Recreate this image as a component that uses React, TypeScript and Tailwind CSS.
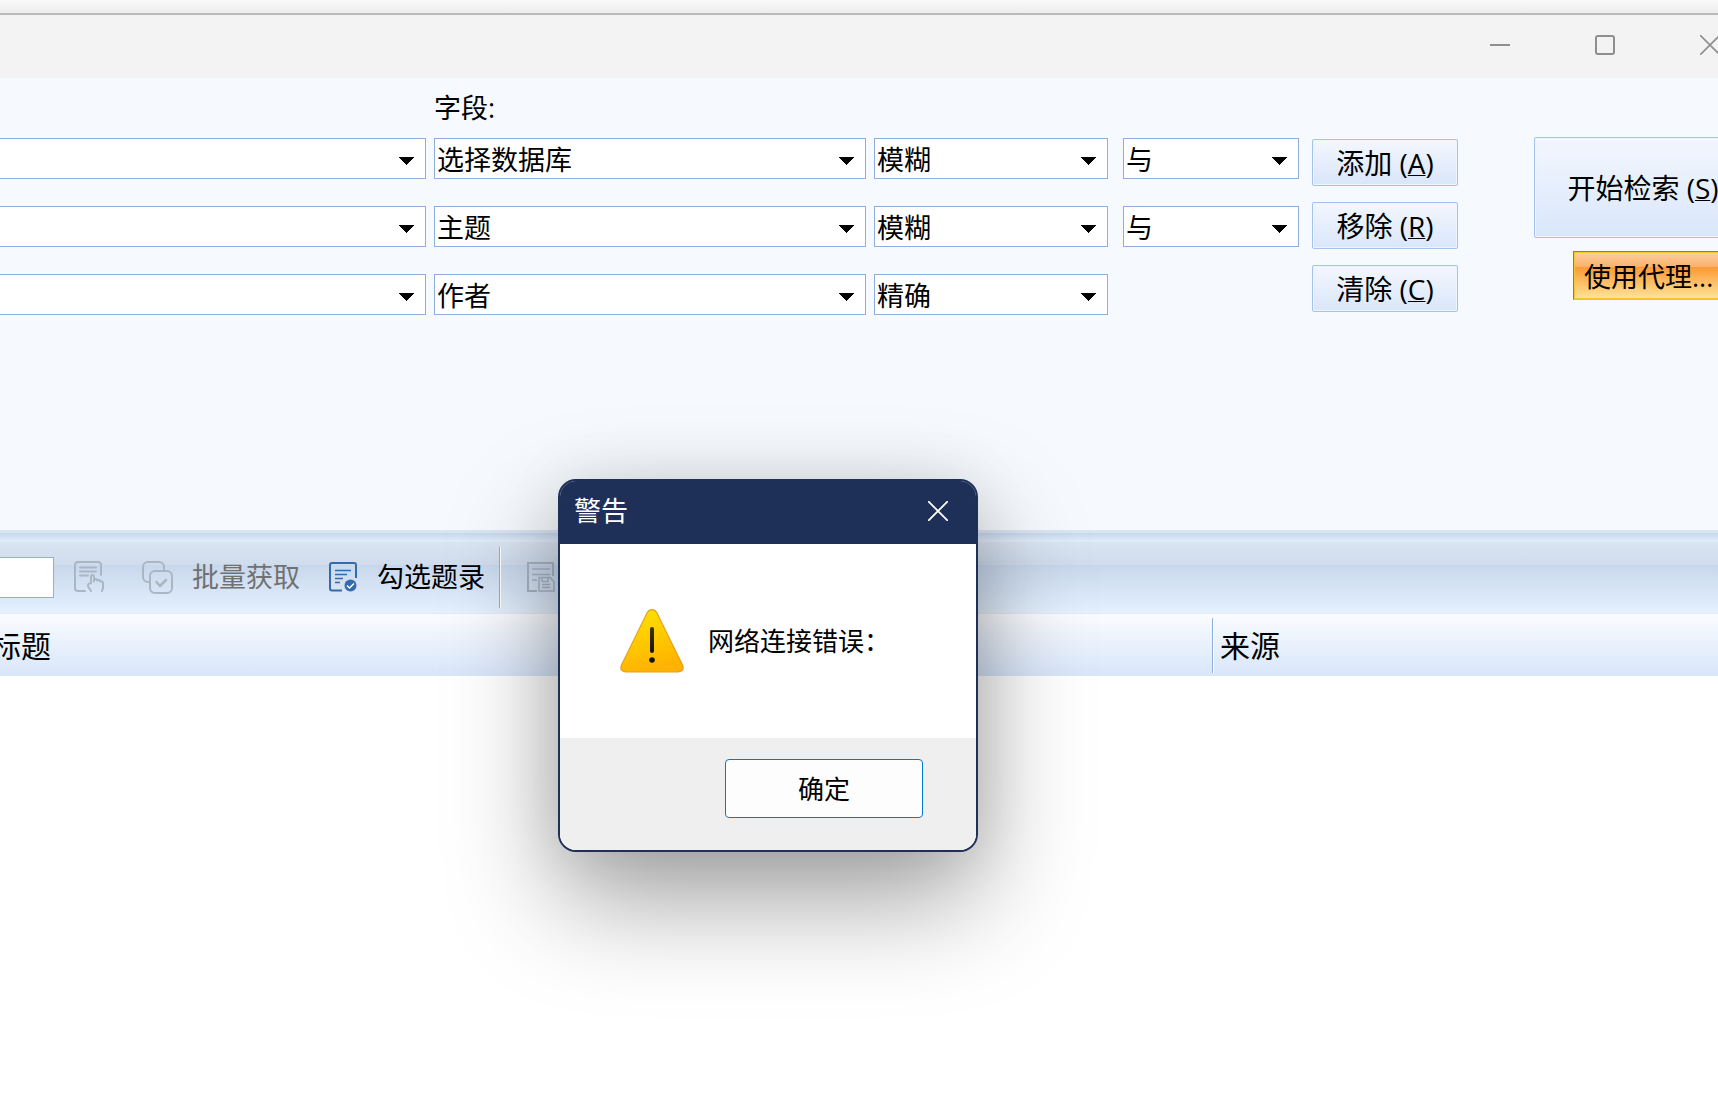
import { useState } from "react";

const fieldOptions = ["选择数据库", "主题", "作者", "标题", "关键词"];
const matchOptions = ["模糊", "精确"];
const logicOptions = ["与", "或", "非"];

const initialRows = [
  { id: 1, term: "", field: "选择数据库", match: "模糊", logic: "与" },
  { id: 2, term: "", field: "主题", match: "模糊", logic: "与" },
  { id: 3, term: "", field: "作者", match: "精确", logic: "" },
];

const actions = [
  { text: "添加", hotkey: "A" },
  { text: "移除", hotkey: "R" },
  { text: "清除", hotkey: "C" },
];

type ComboProps = {
  id: string;
  label: string;
  value: string;
  options: string[];
  onChange: (value: string) => void;
};

function Combo({ id, label, value, options, onChange }: ComboProps) {
  return (
    <div className="relative">
      <select
        id={id}
        aria-label={label}
        value={value}
        onChange={(e) => onChange(e.target.value)}
        className="block h-[41px] w-full appearance-none border border-[#8eaedb] bg-white pl-0.5 pr-10 pt-0.5 text-[27px] leading-9 text-black outline-none"
      >
        {options.map((option) => (
          <option key={option} value={option}>
            {option}
          </option>
        ))}
      </select>
      <svg
        className="pointer-events-none absolute right-3 top-[19px] h-2 w-[15px]"
        viewBox="0 0 15 8"
        fill="#000"
        shapeRendering="crispEdges"
      >
        <path d="M0 0h15L7.5 8z" />
      </svg>
    </div>
  );
}

function TitleBar() {
  return (
    <header className="flex h-[63px] items-start justify-end bg-[#f3f3f3] pr-px text-[#8f8f8f]">
      <button aria-label="最小化" className="flex h-[60px] w-[105px] items-center justify-center">
        <svg width="20" height="20" viewBox="0 0 20 20" stroke="currentColor" strokeWidth="2">
          <path d="M0 10h20" />
        </svg>
      </button>
      <button aria-label="最大化" className="flex h-[60px] w-[105px] items-center justify-center">
        <svg width="20" height="20" viewBox="0 0 20 20" fill="none" stroke="currentColor" strokeWidth="2">
          <rect x="1" y="1" width="18" height="18" rx="2" />
        </svg>
      </button>
      <button aria-label="关闭" className="flex h-[60px] w-[105px] items-center justify-center">
        <svg width="20" height="20" viewBox="0 0 20 20" stroke="currentColor" strokeWidth="1.6">
          <path d="M0 0l20 20M20 0L0 20" />
        </svg>
      </button>
    </header>
  );
}

function SearchPanel() {
  const [rows, setRows] = useState(initialRows);

  const update = (id: number, key: string, value: string) => {
    setRows(rows.map((row) => (row.id === id ? { ...row, [key]: value } : row)));
  };

  return (
    <section className="flex items-start bg-[#f6faff] pb-[215px] pr-[11px] text-[27px]">
      <div className="-ml-0.5 flex-1">
        <div className="grid grid-cols-[1fr_432px_234px_183px] gap-x-2 pb-3 pt-3">
          <label htmlFor="field-1" className="col-start-2 leading-9">
            字段:
          </label>
        </div>
        <div className="flex flex-col gap-[27px]">
          {rows.map((row) => (
            <div key={row.id} className="grid grid-cols-[1fr_432px_234px_183px] gap-x-2">
              <Combo
                id={`term-${row.id}`}
                label="检索词"
                value={row.term}
                options={[""]}
                onChange={(value) => update(row.id, "term", value)}
              />
              <Combo
                id={`field-${row.id}`}
                label="字段"
                value={row.field}
                options={fieldOptions}
                onChange={(value) => update(row.id, "field", value)}
              />
              <Combo
                id={`match-${row.id}`}
                label="匹配"
                value={row.match}
                options={matchOptions}
                onChange={(value) => update(row.id, "match", value)}
              />
              {row.logic && (
                <div className="pl-[7px]">
                  <Combo
                    id={`logic-${row.id}`}
                    label="逻辑"
                    value={row.logic}
                    options={logicOptions}
                    onChange={(value) => update(row.id, "logic", value)}
                  />
                </div>
              )}
            </div>
          ))}
        </div>
      </div>
      <div className="ml-[13px] flex flex-col gap-4 pt-[61px]">
        {actions.map((action) => (
          <button
            key={action.hotkey}
            className="h-[47px] w-[146px] rounded-[2px] border border-[#a3c2ee] bg-linear-to-b from-[#f3f7fe] to-[#d9e6fa] text-[28px] leading-9 shadow-[inset_0_0_0_1px_#eff5fe]"
          >
            {action.text} (<span className="underline decoration-1 underline-offset-1">{action.hotkey}</span>)
          </button>
        ))}
      </div>
      <div className="ml-[76px] flex flex-col items-end gap-[13px] pt-[59px]">
        <button className="h-[101px] w-[218px] rounded-[2px] border border-[#a3c2ee] bg-linear-to-b from-[#f3f7fe] to-[#d9e6fa] text-[28px] leading-9 shadow-[inset_0_0_0_1px_#eff5fe]">
          开始检索 (<span className="underline decoration-1 underline-offset-1">S</span>)
        </button>
        <button className="h-[49px] w-[179px] border border-b-[#c9bfa4] border-l-[#8a7b5c] border-r-[#c9bfa4] border-t-[#8a7b5c] bg-[linear-gradient(#fdcfa2,#fcb16a_32%,#fb9a34_32%,#fee59a)] pl-2.5 pt-0.5 text-left leading-9 shadow-[inset_0_0_0_1px_#f8c62c]">
          使用代理...
        </button>
      </div>
    </section>
  );
}

function PickIcon() {
  return (
    <svg width="30" height="32" viewBox="0 0 30 32" fill="none" stroke="#aab6c4" strokeWidth="2" strokeLinecap="round" strokeLinejoin="round">
      <path d="M11 30H4a3 3 0 0 1-3-3V4a3 3 0 0 1 3-3h20a3 3 0 0 1 3 3v10" />
      <path d="M6 6.500h16M6 10.500h16M6 14.500h8" />
      <path d="M17 30c-1-2-3-3.500-3-5.500 0-1.500 1-2.500 3-2v-7c0-2 3-2 3 0v5-2c1-1 3-.5 3 1 1-1 3-.5 3 1 1-.500 3 0 3 1.500v5l-1 3" />
    </svg>
  );
}

function BatchIcon() {
  return (
    <svg width="31" height="33" viewBox="0 0 31 33" fill="none" stroke="#aab6c4" strokeWidth="2" strokeLinecap="round" strokeLinejoin="round">
      <path d="M8 21H6a5 5 0 0 1-5-5V6a5 5 0 0 1 5-5h11a5 5 0 0 1 5 5v3" />
      <rect x="8" y="10" width="22" height="22" rx="5" />
      <path d="M14.500 21l3.500 4 6-6" strokeWidth="2.500" />
    </svg>
  );
}

function CheckedListIcon() {
  return (
    <svg width="28" height="30" viewBox="0 0 28 30" fill="none" stroke="#356aab" strokeWidth="2">
      <path d="M13 28.500H3a2 2 0 0 1-2-2V3a2 2 0 0 1 2-2h22a2 2 0 0 1 2 2v13" />
      <path d="M6 8.500h16M6 12.500h12M6 16.500h8M6 20.500h5" strokeWidth="1.300" />
      <circle cx="21.500" cy="23.500" r="6" fill="#356aab" stroke="none" />
      <path d="M18 23.500l2.500 2.500 4.500-4.500" stroke="#fff" strokeWidth="1.500" />
    </svg>
  );
}

function SaveListIcon() {
  return (
    <svg width="28" height="30" viewBox="0 0 28 30" fill="none" stroke="#a9b5c3" strokeWidth="2">
      <path d="M10 29H1V1h25v13" />
      <path d="M5 7h18M5 12.500h18M5 18h5" strokeWidth="1.500" />
      <path d="M12 15.500h11l4 4V29H12zM15 15.500v4h6v-4M15 22.500h8M15 25.500h8" strokeWidth="1.500" />
    </svg>
  );
}

function Toolbar() {
  return (
    <>
      <div className="h-[3px] bg-[#dae5f2]" />
      <div className="h-[9px] bg-linear-to-b from-[#c6d7ec] to-[#e3eefb]" />
      <div className="h-[72px] border-b border-[#eceae9] bg-[linear-gradient(#dae5f2,#cfdcec_23px,#c8d7ec_23px,#e4f1fe)] text-[27px]">
        <div className="flex h-[70px] items-center">
          <input aria-label="页码" className="h-[41px] w-[54px] border border-l-0 border-[#93aedb] bg-white px-1 outline-none" />
          <button aria-label="选取" disabled className="ml-5">
            <PickIcon />
          </button>
          <button disabled className="ml-[38px] flex items-center gap-[19px] text-[#717171]">
            <BatchIcon />
            批量获取
          </button>
          <button className="ml-[29px] flex items-center gap-5">
            <CheckedListIcon />
            勾选题录
          </button>
          <div className="ml-[14px] h-[61px] w-0.5 border-l border-[#8eaedb] bg-white" />
          <button aria-label="保存" disabled className="ml-[26px]">
            <SaveListIcon />
          </button>
        </div>
      </div>
    </>
  );
}

function ResultTable() {
  return (
    <table className="-ml-4 w-[calc(100%+16px)] table-fixed border-collapse text-left text-[30px]">
      <thead>
        <tr className="h-[62px] bg-linear-to-b from-[#fafcff] to-[#d8e6f9]">
          <th className="p-0 pl-[7px] font-normal">
            <div className="h-[55px] leading-[56px]">标题</div>
          </th>
          <th className="w-[551px] p-0 font-normal">
            <div className="h-[55px] border-l border-[#8eaedb] pl-[7px] leading-[56px] shadow-[inset_1px_0_0_#fff]">
              来源
            </div>
          </th>
        </tr>
      </thead>
      <tbody />
    </table>
  );
}

function WarningIcon() {
  return (
    <svg width="64" height="64" viewBox="0 0 64 64">
      <defs>
        <linearGradient id="warn" x1="0" y1="0" x2="0.300" y2="1">
          <stop offset="0" stopColor="#ffe600" />
          <stop offset="1" stopColor="#ffb300" />
        </linearGradient>
        <linearGradient id="bar" x1="0" y1="0" x2="0" y2="1">
          <stop offset="0" stopColor="#3d3500" />
          <stop offset="1" stopColor="#151515" />
        </linearGradient>
      </defs>
      <path
        d="M27.300 3.500Q29 .7 32 .7T36.700 3.500L62.500 56Q65 62.500 58 62.800H6Q-1 62.500 1.500 56z"
        fill="url(#warn)"
        stroke="#e5a11a"
        strokeWidth="1.200"
      />
      <rect x="30" y="18" width="4" height="26" rx="2" fill="url(#bar)" />
      <circle cx="32" cy="51" r="2.800" fill="#111" />
    </svg>
  );
}

function WarningDialog({ onClose }: { onClose: () => void }) {
  return (
    <div
      role="alertdialog"
      aria-labelledby="warning-title"
      className="absolute left-[558px] top-[479px] w-[420px] overflow-hidden rounded-[18px] border-2 border-[#1e3058] bg-white shadow-[0_46px_108px_rgba(0,0,0,0.38),0_0_60px_rgba(0,0,0,0.08)]"
    >
      <div className="flex h-[63px] items-center justify-between bg-[#1e3058] pb-1 pl-[14px] pr-7 text-white">
        <h2 id="warning-title" className="text-[27px] leading-9">
          警告
        </h2>
        <button aria-label="关闭" onClick={onClose}>
          <svg width="20" height="20" viewBox="0 0 20 20" stroke="currentColor" strokeWidth="1.800">
            <path d="M0 0l20 20M20 0L0 20" />
          </svg>
        </button>
      </div>
      <div className="flex h-[194px] items-center gap-6 pl-[60px]">
        <WarningIcon />
        <p className="text-[26px] leading-9">网络连接错误：</p>
      </div>
      <div className="flex h-[112px] justify-end bg-[#efefef] pr-[53px] pt-[21px]">
        <button
          onClick={onClose}
          className="h-[59px] w-[198px] rounded-[4px] border border-[#0078d4] bg-[#fdfdfd] text-[26px] leading-9"
        >
          确定
        </button>
      </div>
    </div>
  );
}

export default function App() {
  const [warning, setWarning] = useState(true);

  return (
    <div className="relative min-h-screen overflow-hidden bg-white font-['Open_Sans','Noto_Sans_CJK_SC',sans-serif] text-black">
      <div className="h-[15px] border-b-2 border-[#b9b9b9] bg-linear-to-b from-[#f9f9f9] to-[#ececec]" />
      {/* the window runs past the right edge of the screen */}
      <div className="-mr-[45px]">
        <TitleBar />
        <SearchPanel />
        <Toolbar />
        <ResultTable />
      </div>
      {warning && <WarningDialog onClose={() => setWarning(false)} />}
    </div>
  );
}
